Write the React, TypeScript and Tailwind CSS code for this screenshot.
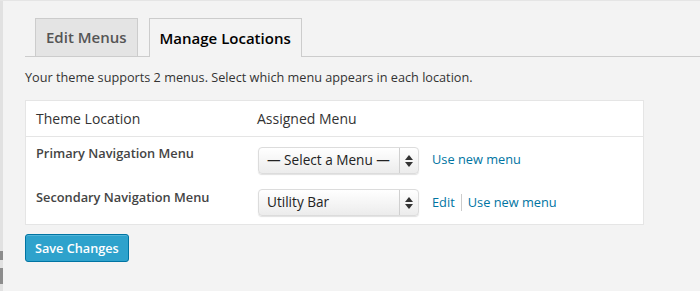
import React from 'react';

const font = { fontFamily: '"Open Sans", "Liberation Sans", sans-serif' };

function Select({ label }: { label: string }) {
  return (
    <div className="flex h-[27px] w-[161px] items-stretch rounded-[4px] border border-[#dcdcdc] bg-gradient-to-b from-[#ffffff] to-[#ececec] shadow-[0_1px_1px_rgba(0,0,0,0.12)]">
      <span className="flex flex-1 items-center pl-[8px] text-[13.6px] text-[#222]">{label}</span>
      <span className="flex w-[19px] flex-col items-center justify-center border-l border-[#d0d0d0] gap-[2px]">
        <svg width="8" height="5" viewBox="0 0 8 5"><path d="M4 0 L8 5 L0 5 Z" fill="#333" /></svg>
        <svg width="8" height="5" viewBox="0 0 8 5"><path d="M0 0 L8 0 L4 5 Z" fill="#333" /></svg>
      </span>
    </div>
  );
}

export default function App() {
  return (
    <div className="flex h-[291px] w-[700px] bg-[#f3f3f3] border-t border-[#e5e5e5]" style={font}>
      <div className="flex w-[3px] flex-col bg-[#e1e1e1]">
        <div className="h-[250px]" />
        <div className="h-[9px] bg-[#8c8c8c]" />
        <div className="h-[8px]" />
        <div className="h-[16px] bg-[#8c8c8c]" />
      </div>
      <div className="flex flex-1 flex-col pl-[22px]">
        <div className="mt-[17px] flex items-end border-b border-[#cccccc] pl-[10px] gap-[11px]">
          <div className="flex h-[38px] items-center border border-b-0 border-[#cccccc] bg-[#e4e4e4] px-[10px] text-[15px] font-semibold text-[#555]">
            Edit Menus
          </div>
          <div className="-mb-px flex h-[39px] items-center border border-b-0 border-[#cccccc] bg-[#f3f3f3] px-[10px] text-[15px] font-semibold text-[#000]">
            Manage Locations
          </div>
        </div>
        <p className="mt-[11px] text-[12.7px] text-[#333]">
          Your theme supports 2 menus. Select which menu appears in each location.
        </p>
        <div className="mt-[13px] w-[619px] border border-[#e5e5e5] bg-white">
          <div className="flex h-[36px] items-center border-b border-[#e5e5e5] text-[14px] text-[#333]">
            <span className="w-[231px] pl-[10px]">Theme Location</span>
            <span>Assigned Menu</span>
          </div>
          <div className="flex pt-[10px] h-[43px]">
            <span className="w-[232px] pl-[10px] -mt-[3px] text-[12.8px] font-semibold text-[#444]">
              Primary Navigation Menu
            </span>
            <Select label="— Select a Menu —" />
            <a className="ml-[13px] mt-[3px] text-[12.8px] text-[#0074a2]">Use new menu</a>
          </div>
          <div className="flex pt-[9px] h-[44px]">
            <span className="w-[232px] pl-[10px] -mt-[1px] text-[12.8px] font-semibold text-[#444]">
              Secondary Navigation Menu
            </span>
            <Select label="Utility Bar" />
            <div className="ml-[13px] mt-[4px] flex items-start text-[12.8px] text-[#0074a2]">
              <a>Edit</a>
              <span className="mx-[6px] mt-[1px] h-[17px] w-px bg-[#ccc]" />
              <a>Use new menu</a>
            </div>
          </div>
        </div>
        <div className="mt-[9px]">
          <button className="h-[28px] rounded-[3px] border border-[#0074a2] bg-[#2ea2cc] px-[9px] text-[12.7px] font-semibold text-white shadow-[inset_0_1px_0_rgba(120,200,230,0.5)]">
            Save Changes
          </button>
        </div>
      </div>
    </div>
  );
}
